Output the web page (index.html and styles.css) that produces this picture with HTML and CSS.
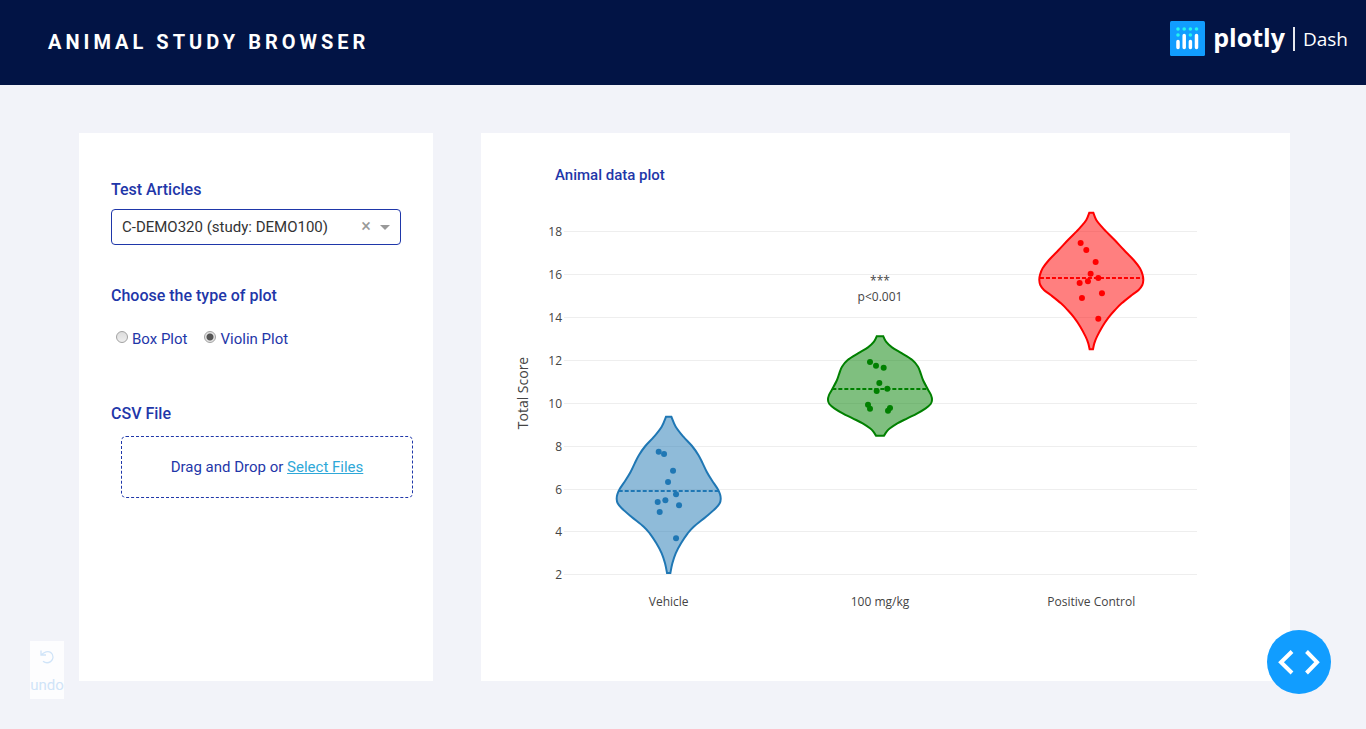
FILE: index.html
```html
<!DOCTYPE html>
<html lang="en">
<head>
<meta charset="utf-8">
<title>Animal Study Browser</title>
<link rel="stylesheet" href="styles.css">
</head>
<body>
<header class="banner">
  <h1 class="banner-title">ANIMAL STUDY BROWSER</h1>
  <a class="logo" href="#" aria-label="Plotly Dash">
    <svg class="logo-mark" viewBox="0 0 35 35" aria-hidden="true">
      <rect width="35" height="35" rx="1.5" fill="#119dff"/>
      <g fill="#25f4ee">
        <circle cx="8" cy="8" r="1.800"/><circle cx="14.2" cy="8" r="1.800"/><circle cx="20.4" cy="8" r="1.800"/><circle cx="26.500" cy="8" r="1.800"/>
        <circle cx="8" cy="14" r="1.800"/><circle cx="20.4" cy="14" r="1.800"/>
      </g>
      <g stroke="#fff" stroke-width="3.500" stroke-linecap="round">
        <path d="M8 20.500V26.500M14.2 14.500V26.500M20.4 20.500V26.500M26.500 14.500V26.500"/>
      </g>
    </svg>
    <span class="logo-name">plotly</span>
    <span class="logo-product">Dash</span>
  </a>
</header>

<main class="layout">
  <section class="card controls">
    <label class="heading" for="article">Test Articles</label>
    <div class="dropdown">
      <select id="article" class="dropdown-select">
        <option>C-DEMO320 (study: DEMO100)</option>
      </select>
      <button class="dropdown-clear" type="button" aria-label="Clear value">×</button>
    </div>

    <fieldset class="plot-type">
      <legend class="heading">Choose the type of plot</legend>
      <div class="radios">
        <label class="radio"><input type="radio" name="plot"> Box Plot</label>
        <label class="radio"><input type="radio" name="plot" checked> Violin Plot</label>
      </div>
    </fieldset>

    <h2 class="heading">CSV File</h2>
    <div class="upload">Drag and Drop or <a href="#">Select Files</a></div>
  </section>

  <section class="card plot">
    <h2 class="heading plot-title">Animal data plot</h2>
    <svg id="chart" class="chart" viewBox="0 0 809 450" role="img" aria-label="Violin plot of total score by group"></svg>
  </section>
</main>

<button class="undo" type="button">
  <svg class="undo-icon" viewBox="0 0 16 16" aria-hidden="true"><path d="M2 1.5V6H7M2.5 5.8C5 3 9 1.6 11.8 3.6C15 6 14.6 10.6 11.6 12.6C9 14.3 6 13.8 4 12.2" fill="none" stroke="currentColor" stroke-width="1.3"/></svg>
  <span>undo</span>
</button>

<button class="debug" type="button" aria-label="Open dev tools">
  <svg viewBox="0 0 64 64" aria-hidden="true"><path d="M25 21.5L14 32.2L25 43M39.5 21.5L50 32.2L39.5 43" fill="none" stroke="#fff" stroke-width="4"/></svg>
</button>
<script src="app.js"></script>
</body>
</html>
```
FILE: styles.css
```css
* { box-sizing: border-box; }

body {
  margin: 0;
  min-height: 100vh;
  background: #f2f3f9;
  color: #1f37a9;
  font: 15px/24px Roboto, sans-serif;
}

.banner {
  display: flex;
  align-items: center;
  justify-content: space-between;
  height: 85px;
  padding: 0 18px 0 48px;
  background: #021445;
  color: #fff;
}

.banner-title {
  margin: 0 0 2px;
  font-size: 20px;
  font-weight: 700;
  letter-spacing: 4px;
}

.logo {
  display: flex;
  align-items: center;
  margin-bottom: 8px;
  color: #fff;
  text-decoration: none;
  font-family: "Open Sans", sans-serif;
}

.logo-mark { width: 35px; height: 35px; margin-right: 8px; }
.logo-name { padding-bottom: 4px; font-size: 25px; font-weight: 700; }

.logo-product {
  margin-left: 8px;
  padding-left: 8px;
  border-left: 2px solid #e6e8ee;
  font-size: 19px;
  font-weight: 400;
}

.layout {
  display: grid;
  grid-template-columns: 354fr 809fr;
  gap: 48px;
  padding: 48px 76px 48px 79px;
}

.card { background: #fff; }
.controls { padding: 45px 32px 32px; }

.heading {
  display: block;
  margin: 0;
  padding: 0;
  font-size: 16px;
  font-weight: 500;
  line-height: 24px;
}

.dropdown { position: relative; margin: 7px 0 39px; }

.dropdown-select {
  display: block;
  width: 100%;
  height: 36px;
  padding: 0 50px 0 10px;
  border: 1px solid #1f37a9;
  border-radius: 4px;
  appearance: none;
  background: #fff;
  color: #333;
  font: inherit;
}

.dropdown::after {
  content: "";
  position: absolute;
  top: 16px;
  right: 11px;
  border: 5px solid transparent;
  border-top-color: #999;
  border-bottom: 0;
}

.dropdown-clear {
  position: absolute;
  top: 8px;
  right: 26px;
  width: 18px;
  padding: 0;
  border: 0;
  background: none;
  color: #999;
  font: 18px/18px Roboto, sans-serif;
}

.plot-type { margin: 0 0 51px; padding: 0; border: 0; }
.radios { display: flex; gap: 17px; padding: 19px 0 0 5px; }
.radio { display: flex; align-items: center; gap: 4px; }

.radio input {
  width: 12px;
  height: 12px;
  margin: 0 0 4px;
  border: 1px solid #a2a2a2;
  border-radius: 50%;
  appearance: none;
  background: linear-gradient(#ddd, #eee);
}

.radio input:checked {
  background: radial-gradient(circle, #555 0 3px, #e4e4e4 4px);
}

.upload {
  width: calc(100% + 2px);
  margin: 10px 0 0 10px;
  border: 1px dashed #1f37a9;
  border-radius: 5px;
  line-height: 60px;
  text-align: center;
}

.upload a { color: #2fa8d8; }

.plot { padding: 30px 0 41px; }
.plot-title { padding-left: 74px; font-size: 15px; }

.chart {
  display: block;
  width: 100%;
  margin-top: 3px;
  fill: #444;
  font: 12px "Open Sans", sans-serif;
}

.grid-line { stroke: #eee; }
.tick-y { text-anchor: end; }
.tick-x { text-anchor: middle; }
.axis-title { font-size: 14px; text-anchor: middle; }
.violin { fill-opacity: 0.5; stroke-width: 2; }
.mean { stroke-width: 2; stroke-dasharray: 4 2; }

.undo {
  position: fixed;
  bottom: 30px;
  left: 30px;
  display: flex;
  flex-direction: column;
  align-items: center;
  gap: 8px;
  width: 34px;
  height: 58px;
  padding: 8px 0 0;
  border: 0;
  background: #fdfdfe;
  color: #d0e4f8;
  font: 15px/24px Roboto, sans-serif;
}

.undo-icon { width: 16px; height: 16px; flex: none; }

.debug {
  position: fixed;
  right: 35px;
  bottom: 35px;
  width: 64px;
  height: 64px;
  padding: 0;
  border: 0;
  border-radius: 50%;
  background: #119dff;
}

.debug svg { display: block; width: 64px; height: 64px; }
```
FILE: app.js
```js
const chart = document.getElementById("chart");
const SVG = "http://www.w3.org/2000/svg";

const STEPS = 3;

const groups = [
  {
    name: "Vehicle", color: "#1f77b4", cx: 187.7, top: 210, mean: [273, 150],
    profile: [[50,8],[80,21],[110,44],[138,70],[165,89],[190,102],[215,114],[240,129],[267,147],[283,154],[297,156],[310,153],[325,141],[350,112],[380,75],[400,57],[430,37],[460,21],[490,11],[519,5]],
    points: [[-30,155],[-14,162],[13,212],[-2,246],[22,283],[-10,301],[-33,306],[31,316],[-27,336],[22,415]]
  },
  {
    name: "100 mg/kg", color: "#008000", cx: 399, top: 70, mean: [387, 143],
    profile: [[229,10],[245,18],[262,36],[280,66],[300,97],[320,114],[340,122],[360,129],[387,143],[405,153],[420,156],[432,152],[445,137],[460,112],[475,82],[490,52],[505,30],[515,20],[527,12]],
    points: [[-30,306],[-12,317],[11,323],[-2,369],[22,386],[-10,393],[-36,434],[-30,446],[30,444],[24,452]]
  },
  {
    name: "Positive Control", color: "#ff0000", cx: 610.3, top: 10, mean: [234, 154],
    profile: [[38,6],[60,15],[80,31],[94,44],[120,70],[150,98],[180,127],[205,146],[225,154],[240,156],[255,153],[270,142],[285,122],[310,91],[330,71],[352,52],[380,33],[410,17],[430,9],[448,5]],
    points: [[-32,129],[-15,150],[13,186],[-2,221],[21,234],[-10,244],[-35,249],[32,280],[-28,294],[21,356]]
  }
];

function add(tag, attrs, text) {
  const node = document.createElementNS(SVG, tag);
  for (const key in attrs) node.setAttribute(key, attrs[key]);
  if (text) node.textContent = text;
  chart.appendChild(node);
}

// Smooth curve through the given points, starting from the current one.
function curve(pts) {
  let d = "";
  for (let i = 0; i < pts.length - 1; i++) {
    const a = pts[i - 1] || pts[i], b = pts[i], c = pts[i + 1], e = pts[i + 2] || c;
    d += `C${b[0] + (c[0] - a[0]) / 6} ${b[1] + (c[1] - a[1]) / 6} ${c[0] - (e[0] - b[0]) / 6} ${c[1] - (e[1] - b[1]) / 6} ${c[0]} ${c[1]}`;
  }
  return d;
}

for (let value = 18; value >= 2; value -= 2) {
  const y = Math.floor(41.5 + (18 - value) * 21.46) + 0.5;
  add("line", { class: "grid-line", x1: 83, x2: 716, y1: y, y2: y });
  add("text", { class: "tick-y", x: 81, y: y + 4.5 }, String(value));
}

for (const g of groups) {
  const y = v => g.top + v / STEPS;
  const right = g.profile.map(p => [g.cx + p[1] / STEPS, y(p[0])]);
  const left = g.profile.map(p => [g.cx - p[1] / STEPS, y(p[0])]).reverse();
  add("path", {
    class: "violin", fill: g.color, stroke: g.color,
    d: `M${right[0]}${curve(right)}L${left[0]}${curve(left)}Z`
  });
  add("line", {
    class: "mean", stroke: g.color, y1: y(g.mean[0]), y2: y(g.mean[0]),
    x1: g.cx - g.mean[1] / STEPS, x2: g.cx + g.mean[1] / STEPS
  });
  for (const p of g.points) {
    add("circle", { cx: g.cx + p[0] / STEPS, cy: y(p[1]), r: 3, fill: g.color });
  }
  add("text", { class: "tick-x", x: g.cx, y: 416 }, g.name);
}

add("text", { class: "tick-x", x: 399, y: 95 }, "***");
add("text", { class: "tick-x", x: 399, y: 111 }, "p<0.001");
add("text", { class: "axis-title", transform: "translate(47 203) rotate(-90)" }, "Total Score");
```
